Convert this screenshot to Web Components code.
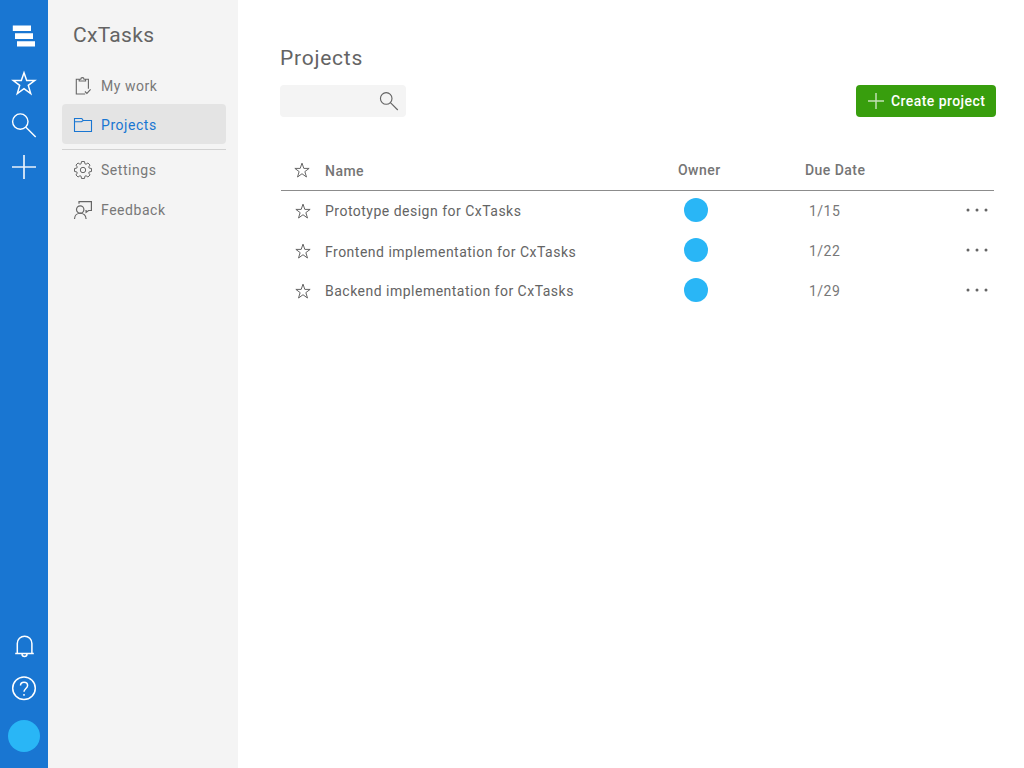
<!DOCTYPE html>
<html lang="en">
<head>
<meta charset="utf-8">
<title>CxTasks</title>
<style>
html,body{margin:0;height:100%}
body{font-family:Roboto,"Liberation Sans",sans-serif;color:#646464;background:#fff;overflow:hidden}
</style>
</head>
<body>
<cx-app></cx-app>
<script>
// Outline of an eight-toothed gear centred on (10,10).
function gearPath() {
  const points = [];
  for (let i = 0; i < 8; i++) {
    for (const [offset, radius] of [[-17, 6.5], [-10, 8.6], [10, 8.6], [17, 6.5]]) {
      const angle = (i * 45 + offset) * Math.PI / 180;
      points.push((10 + radius * Math.cos(angle)).toFixed(2) + ' ' + (10 + radius * Math.sin(angle)).toFixed(2));
    }
  }
  return 'M' + points.join('L') + 'z';
}

const ICONS = {
  logo: ['0 0 24 24', '<path fill="currentColor" stroke="none" d="M.8 1.400h18.200v5.600H.8zM3 9.200h18v5.700H3zM5 17.200h18v5.300H5z"/>', 1],
  star: ['0 0 24 24', '<path d="M12 1.700l2.700 7.900h8l-6.400 4.800 2.400 8.100L12 17.600l-6.700 4.900 2.400-8.100-6.400-4.800h8z"/>', 1.5],
  search: ['0 0 24 24', '<circle cx="8.3" cy="8.6" r="7.7"/><path d="M13.9 14.2l9.800 9.800"/>', 1.4],
  plus: ['0 0 24 24', '<path d="M12 0v24M0 12h24"/>', 1.5],
  bell: ['0 0 24 24', '<path d="M3.2 19.5h18.600M5.300 19.500V9.500a7.300 7.300 0 0 1 14.600 0v10M10 20a2.500 2.500 0 0 0 5 0"/>', 1.5],
  help: ['0 0 24 24', '<circle cx="12" cy="12.300" r="11.300"/><path d="M8.500 9.600C8.500 7.300 10 6.300 12 6.300s3.600 1.200 3.600 3.200c0 2.900-3.600 3.100-3.600 6.300"/><path d="M12 17.900v1.900"/>', 1.5],
  task: ['0 0 20 20', '<path d="M6 4.300H3.300V19h8.900M12.500 4.300h2.900v9.500M6.200 6V4.300h1.600c0-2.200 3.200-2.200 3.200 0h1.600V6z"/><path d="M11.900 16.500l2 1.900 3.700-4"/>', 1.1],
  folder: ['0 0 20 20', '<path d="M1.500 4.500h7.300l1.400 2h8.300v11H1.500zM1.500 7.700h7l1.700-1.200"/>', 1.1],
  gear: ['0 0 20 20', '<circle cx="10" cy="10" r="2.700"/><path stroke-linejoin="round" d="' + gearPath() + '"/>', 1],
  feedback: ['0 0 20 20', '<circle cx="7.200" cy="9.500" r="3.700"/><path d="M1.500 19c0-7.700 11.600-7.700 11.600 0M6 3.700V1.700h12.400v8.800h-2.800l-2.500 1.900v-1.900h-.7"/>', 1.200],
  more: ['0 0 24 6', '<g fill="currentColor" stroke="none"><circle cx="3" cy="3" r="1.500"/><circle cx="12" cy="3" r="1.500"/><circle cx="21" cy="3" r="1.500"/></g>', 1]
};

class Base extends HTMLElement {
  connectedCallback() {
    if (!this.shadowRoot) this.attachShadow({mode: 'open'}).innerHTML = this.view();
  }
  attr(name, fallback = '') { return this.getAttribute(name) ?? fallback; }
}

customElements.define('cx-icon', class extends Base {
  view() {
    const [box, body, weight] = ICONS[this.attr('name')];
    return `<style>:host{display:block;flex:none;width:24px;height:24px}svg{display:block;width:100%;height:100%;overflow:visible}</style>
      <svg viewBox="${box}" fill="none" stroke="currentColor" stroke-width="${this.attr('weight', weight)}">${body}</svg>`;
  }
});

customElements.define('cx-avatar', class extends Base {
  view() {
    return `<style>:host{display:block;flex:none;width:24px;height:24px;border-radius:50%;background:#29b6f6}</style>`;
  }
});

customElements.define('cx-rail', class extends Base {
  view() {
    return `<style>
      :host{display:flex;flex-direction:column;align-items:center;box-sizing:border-box;width:48px;height:100%;padding:24px 0 16px;background:#1976d2;color:#fff}
      .star{margin-top:23px}.search{margin-top:18px}.plus{margin-top:18px;opacity:.9}
      .bell{margin-top:auto}.help{margin-top:18px}
      cx-avatar{width:32px;height:32px;margin-top:20px}
    </style>
    <cx-icon name="logo"></cx-icon>
    <cx-icon class="star" name="star"></cx-icon>
    <cx-icon class="search" name="search"></cx-icon>
    <cx-icon class="plus" name="plus" weight="1.7"></cx-icon>
    <cx-icon class="bell" name="bell"></cx-icon>
    <cx-icon class="help" name="help"></cx-icon>
    <cx-avatar></cx-avatar>`;
  }
});

customElements.define('cx-nav-item', class extends Base {
  view() {
    return `<style>
      :host{display:flex;align-items:center;box-sizing:border-box;height:40px;padding:0 11px;gap:8px;border-radius:4px;color:#787878;font-size:14px;line-height:20px;letter-spacing:.55px}
      :host([active]){background:#e4e4e4;color:#1976d2}
      cx-icon{width:20px;height:20px;color:#666}
      :host([active]) cx-icon{color:#1976d2}
      span{padding-top:var(--label-shift,1px)}
    </style><cx-icon name="${this.attr('icon')}"></cx-icon><span><slot></slot></span>`;
  }
});

customElements.define('cx-sidebar', class extends Base {
  view() {
    return `<style>
      :host{display:block;box-sizing:border-box;height:100%;padding:23px 12px 0 14px;background:#f4f4f4}
      h1{margin:0 0 18px 11px;font-size:21px;line-height:25px;font-weight:400;letter-spacing:.3px}
      .work{height:38px}
      hr{height:1px;border:0;margin:5px 0 0;background:#d2d2d2}
      hr ~ cx-nav-item{--label-shift:0px}
    </style>
    <h1>CxTasks</h1>
    <cx-nav-item class="work" icon="task">My work</cx-nav-item>
    <cx-nav-item icon="folder" active>Projects</cx-nav-item>
    <hr>
    <cx-nav-item icon="gear">Settings</cx-nav-item>
    <cx-nav-item icon="feedback">Feedback</cx-nav-item>`;
  }
});

customElements.define('cx-search', class extends Base {
  view() {
    return `<style>
      :host{display:flex;align-items:center;justify-content:flex-end;box-sizing:border-box;width:126px;height:32px;padding:0 8px;border-radius:4px;background:#f4f4f4}
      cx-icon{width:18px;height:18px}
    </style><cx-icon name="search" weight="1.5"></cx-icon>`;
  }
});

customElements.define('cx-button', class extends Base {
  view() {
    return `<style>
      :host{display:flex;align-items:center;box-sizing:border-box;width:140px;height:32px;padding-left:12px;gap:7px;border-radius:4px;background:#389e0d;color:#fff;font-size:14px;font-weight:500;line-height:20px;letter-spacing:.43px;white-space:nowrap}
      cx-icon{width:16px;height:16px;opacity:.7}
    </style><cx-icon name="plus" weight="2.200"></cx-icon><slot></slot>`;
  }
});

const COLUMNS = '44px 353px 127px 1fr auto';

customElements.define('cx-table-head', class extends Base {
  view() {
    return `<style>
      :host{display:grid;grid-template-columns:${COLUMNS};align-items:center;box-sizing:border-box;height:40px;margin-left:1px;padding-bottom:1px;border-bottom:1px solid #8c8c8c;color:#757575;font-size:14px;font-weight:500;line-height:20px;letter-spacing:.45px}
      cx-icon{width:16px;height:16px;margin-left:13px;color:#666}
      .name{padding-top:2px}
    </style>
    <cx-icon name="star"></cx-icon><span class="name">Name</span><span>Owner</span><span>Due Date</span>`;
  }
});

customElements.define('cx-project-row', class extends Base {
  view() {
    return `<style>
      :host{display:grid;grid-template-columns:${COLUMNS};align-items:center;height:40px;margin-left:1px;font-size:14px;line-height:20px;letter-spacing:.49px}
      cx-icon[name=star]{width:16px;height:16px;margin-left:14px;margin-top:2px}
      .name{padding-top:var(--name-shift,2px)}
      .date{padding:2px 0 0 4px;color:#787878}
      cx-avatar{margin-left:6px}
      cx-icon[name=more]{height:6px;margin-right:5px}
    </style>
    <cx-icon name="star"></cx-icon><span class="name"><slot></slot></span><cx-avatar></cx-avatar>
    <span class="date">${this.attr('due')}</span><cx-icon name="more"></cx-icon>`;
  }
});

customElements.define('cx-projects', class extends Base {
  view() {
    return `<style>
      :host{display:block;padding:46px 28px 0 42px}
      h2{margin:0;font-size:21px;line-height:25px;font-weight:400;letter-spacing:.75px}
      .tools{display:flex;justify-content:space-between;margin-top:14px}
      .table{margin:34px 2px 0 0}
      .low{--name-shift:4px}
      cx-project-row:first-of-type{margin-top:-1px}
    </style>
    <h2>Projects</h2>
    <div class="tools"><cx-search></cx-search><cx-button>Create project</cx-button></div>
    <div class="table">
      <cx-table-head></cx-table-head>
      <cx-project-row due="1/15">Prototype design for CxTasks</cx-project-row>
      <cx-project-row class="low" due="1/22">Frontend implementation for CxTasks</cx-project-row>
      <cx-project-row due="1/29">Backend implementation for CxTasks</cx-project-row>
    </div>`;
  }
});

customElements.define('cx-app', class extends Base {
  view() {
    return `<style>:host{display:grid;grid-template-columns:48px 190px 1fr;height:100vh}</style>
      <cx-rail></cx-rail><cx-sidebar></cx-sidebar><cx-projects></cx-projects>`;
  }
});
</script>
</body>
</html>
